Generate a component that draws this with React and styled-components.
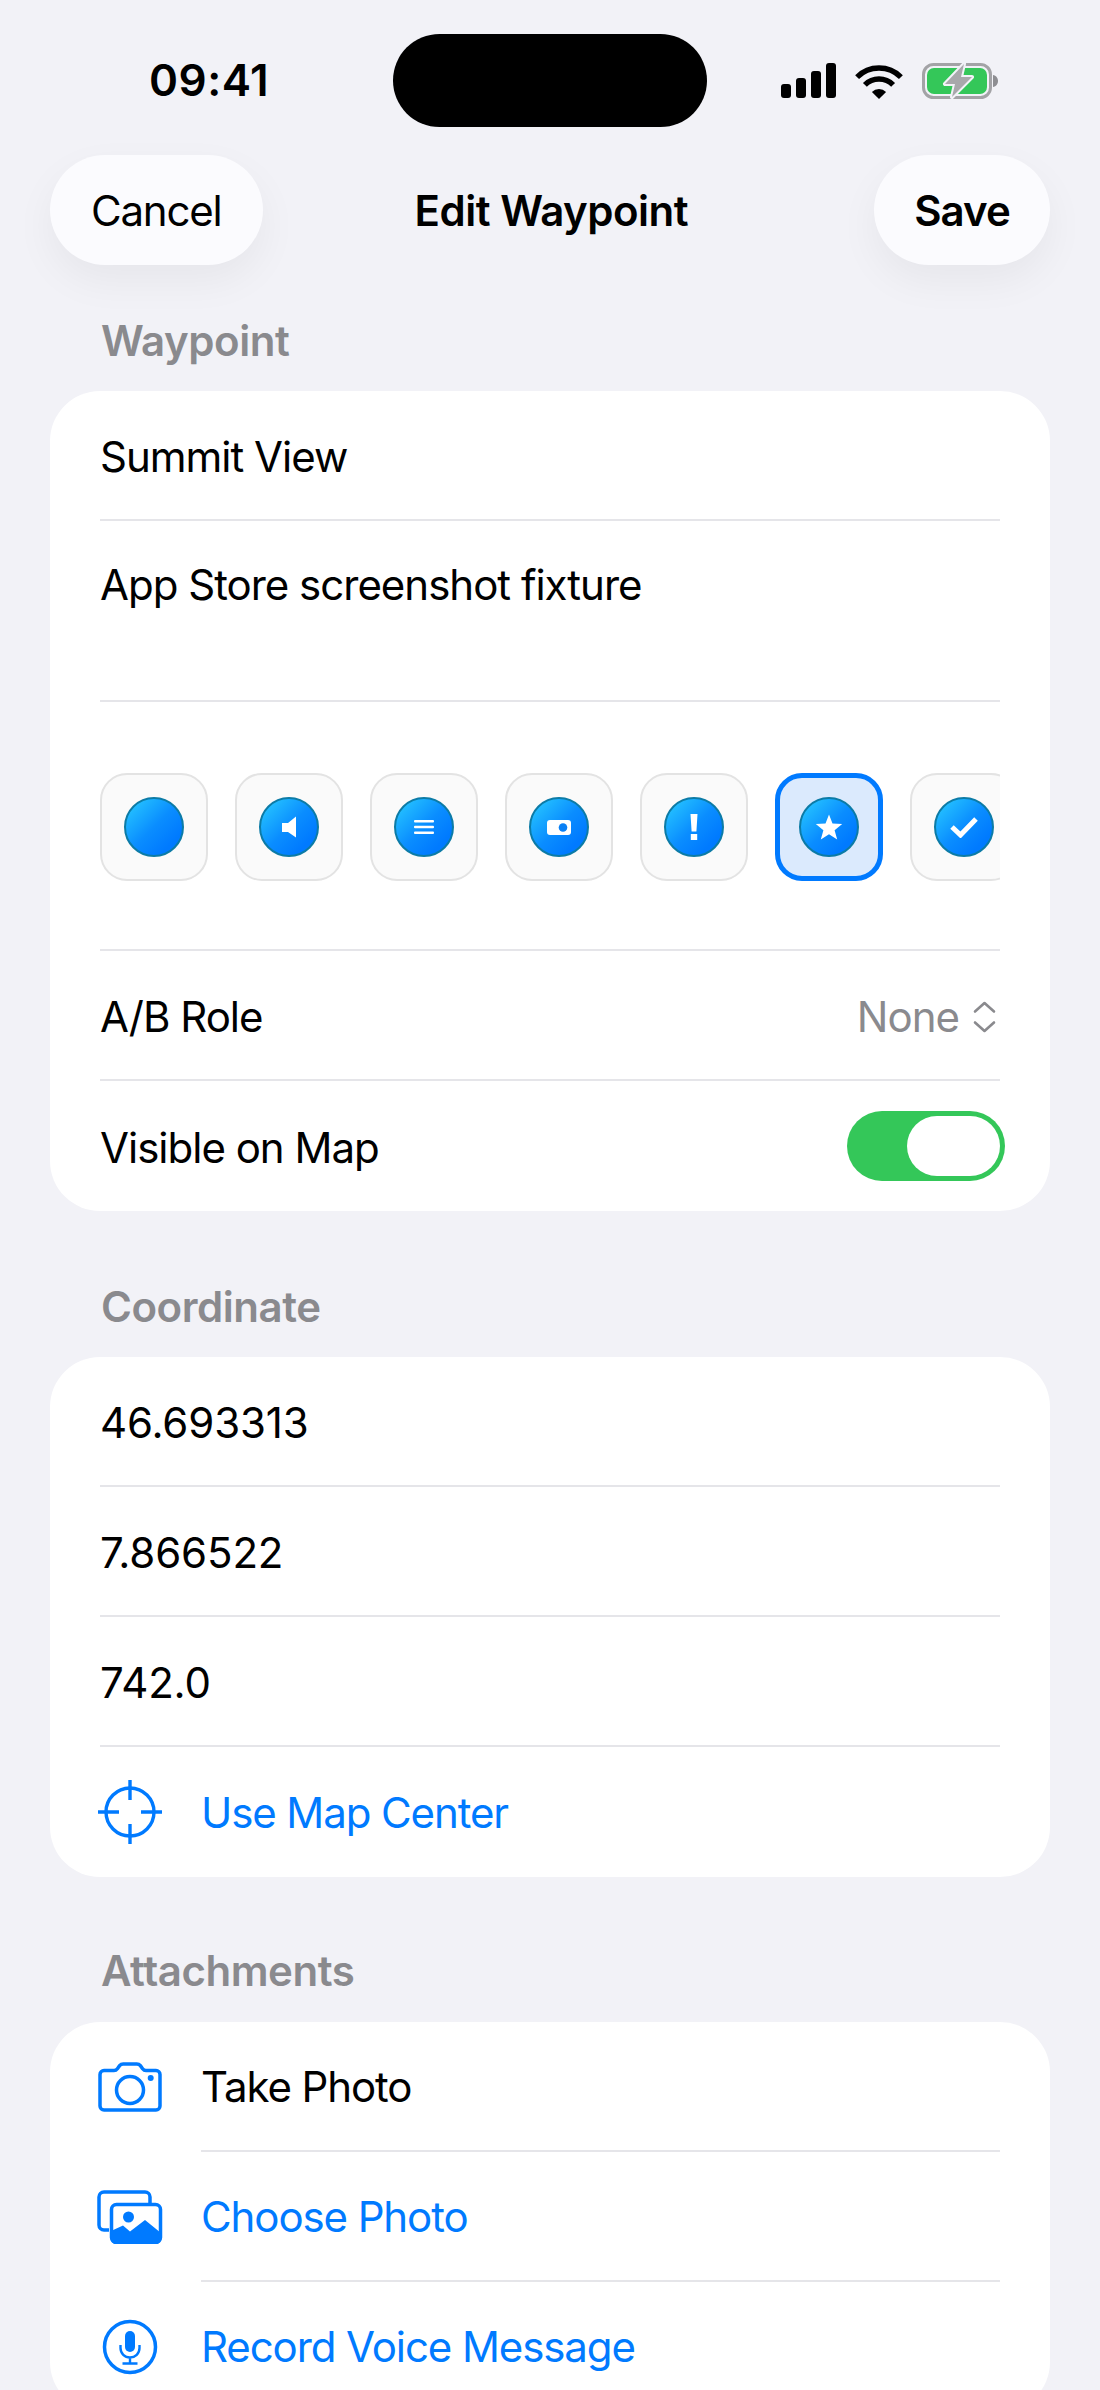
import React from "react";
import styled, { createGlobalStyle } from "styled-components";

const Global = createGlobalStyle`
  html, body { margin: 0; padding: 0; background: #f2f2f7; }
  * { box-sizing: border-box; }
  body { font-family: Inter, "Noto Sans", "Liberation Sans", sans-serif; -webkit-font-smoothing: antialiased; }
`;
const Page = styled.div`
  width: 1100px; height: 2390px; overflow: hidden; background: #f2f2f7; color: #000;
`;
const StatusBar = styled.div`
  display: grid; grid-template-columns: 393px 314px 1fr; height: 127px; padding-top: 34px;
`;
const Time = styled.div`
  font-size: 44px; font-weight: 600; line-height: 93px; padding-left: 149px; letter-spacing: 0.5px;
`;
const Island = styled.div`
  height: 93px; border-radius: 47px; background: #000;
`;
const StatusIcons = styled.div`
  display: flex; align-items: center; padding-left: 74px; height: 93px;
`;
const NavBar = styled.div`
  display: flex; align-items: center; justify-content: space-between;
  margin-top: 28px; padding: 0 50px; height: 110px;
`;
const NavButton = styled.div`
  height: 110px; padding: 0 ${p => p.$pad}px; border-radius: 55px; background: #fbfbfe;
  display: flex; align-items: center; font-size: 42px; font-weight: ${p => p.$bold ? 600 : 400};
  letter-spacing: ${p => p.$bold ? -0.9 : -1.2}px;
  box-shadow: 0 16px 40px rgba(0,0,0,0.05);
`;
const NavTitle = styled.div`
  font-size: 42px; font-weight: 600; letter-spacing: -0.5px; margin-right: 34px;
`;
const Section = styled.section`
  padding: 0 50px; margin-top: ${p => p.$top}px;
`;
const SectionTitle = styled.h2`
  margin: 0 0 ${p => p.$after}px; padding-left: 51px; font-size: 42px; font-weight: 600; line-height: 48px;
  color: #8a8a8e; letter-spacing: -0.45px;
`;
const Card = styled.div`
  background: #fff; border-radius: 50px; padding: 0 50px;
`;
const Row = styled.div`
  display: flex; align-items: ${p => p.$top ? "flex-start" : "center"}; justify-content: space-between;
  height: ${p => p.$h || 130}px; line-height: ${p => p.$top ? 127 : 130}px; font-size: 42px;
  padding-top: ${p => p.$top ? 0 : 3}px;
  letter-spacing: ${p => p.$num ? -0.15 : -1}px;
  border-bottom: ${p => p.$last ? "none" : "2px solid #e5e5e9"};
`;
const ActionRow = styled.div`
  display: flex; align-items: center; height: 130px; font-size: 42px; letter-spacing: -1.1px;
  color: ${p => p.$plain ? "#000" : "#007aff"};
`;
const ActionIcon = styled.div`
  width: 66px; margin-left: -3px; margin-right: 38px; display: flex; justify-content: center; flex: none;
`;
const ActionLabel = styled.div`
  flex: 1; align-self: stretch; display: flex; align-items: center;
  border-bottom: ${p => p.$last ? "none" : "2px solid #e5e5e9"};
`;
const Picker = styled.div`
  display: flex; gap: 27px; overflow: hidden; height: 249px; padding-top: 71px;
  border-bottom: 2px solid #e5e5e9;
`;
const Tile = styled.div`
  flex: none; width: 108px; height: 108px; border-radius: 27px;
  display: flex; align-items: center; justify-content: center;
  background: ${p => p.$on ? "#dbeafd" : "#fafafa"};
  border: ${p => p.$on ? "5px solid #007aff" : "2px solid #e3e3e3"};
`;
const Marker = styled.div`
  flex: none; width: 60px; height: 60px; border-radius: 50%; border: 2px solid #0c7ba6;
  background: linear-gradient(135deg, #25c3ff 8%, #0a8dff 50%, #007aff 80%);
  display: flex; align-items: center; justify-content: center;
`;
const RightValue = styled.div`
  display: flex; align-items: center; gap: 14px; color: #8a8a8e; margin-right: 4px; letter-spacing: -1px;
`;
const Toggle = styled.div`
  width: 158px; height: 70px; margin-right: -5px; margin-top: -3px; border-radius: 35px; background: #34c759;
  padding: 5px; display: flex; justify-content: flex-end;
`;
const Knob = styled.div`
  width: 93px; height: 60px; border-radius: 30px; background: #fff;
`;

const Signal = () => (
  <svg width="55" height="36" viewBox="0 0 55 36" fill="#000">
    <rect x="0" y="21" width="10" height="14" rx="3" />
    <rect x="15" y="15" width="10" height="20" rx="3" />
    <rect x="30" y="8" width="10" height="27" rx="3" />
    <rect x="45" y="0" width="10" height="35" rx="3" />
  </svg>
);
const Wifi = () => (
  <svg width="48" height="36" viewBox="0 0 48 36" style={{ marginLeft: 19 }}>
    <g fill="none" stroke="#000" strokeWidth="5.5">
      <path d="M2.1 14.1A31 31 0 0 1 45.9 14.1" />
      <path d="M9.9 21.9A20 20 0 0 1 38.1 21.9" />
    </g>
    <path d="M24 36L16.9 28.9A10 10 0 0 1 31.1 28.9Z" fill="#000" />
  </svg>
);
const Battery = () => (
  <svg width="79" height="36" viewBox="0 0 79 36" style={{ marginLeft: 19 }}>
    <rect x="1.5" y="1.5" width="67" height="33" rx="10" fill="none" stroke="#a3a3a6" strokeWidth="3" />
    <rect x="5" y="5" width="60" height="26" rx="7" fill="#34c759" />
    <path d="M71 12c3 .5 5 3 5 6s-2 5.500-5 6Z" fill="#8e8e92" />
    <path d="M42 1L23 21H33L30 34L50 14H39Z" fill="#a8a8ab" stroke="#f2f2f7" strokeWidth="4" paintOrder="stroke" strokeLinejoin="round" />
  </svg>
);

const glyphs = {
  none: null,
  speaker: <svg width="16" height="22" viewBox="0 0 16 22" fill="#fff"><path d="M15 0.500V21.500L7 16H1V7H7Z" /></svg>,
  menu: <svg width="20" height="16" viewBox="0 0 20 16" fill="#fff"><rect y="1" width="20" height="2.500" rx="1" /><rect y="6.800" width="20" height="2.500" rx="1" /><rect y="12.600" width="20" height="2.500" rx="1" /></svg>,
  radar: <svg width="24" height="15" viewBox="0 0 24 15"><rect width="24" height="15" rx="3" fill="#fff" /><circle cx="16" cy="7.500" r="4.300" fill="#0a80f5" /></svg>,
  alert: <svg width="8" height="26" viewBox="0 0 8 26" fill="#fff"><path d="M0.500 0H7.500L6.400 17.500H1.600Z" /><rect x="0.800" y="20" width="6.400" height="6" /></svg>,
  star: <svg width="28" height="26" viewBox="0 0 28 26" fill="#fff"><path d="M14 0.500L17.500 9.500L27.200 10L19.600 16.200L22.200 25.500L14 20.200L5.800 25.500L8.400 16.200L0.800 10L10.500 9.500Z" /></svg>,
  check: <svg width="28" height="22" viewBox="0 0 28 22" fill="none" stroke="#fff" strokeWidth="5"><path d="M2 11L10.500 19L26 3" /></svg>,
};
const tiles = ["none", "speaker", "menu", "radar", "alert", "star", "check"];

const Updown = () => (
  <svg width="23" height="32" viewBox="0 0 23 32" fill="none" stroke="#8a8a8e" strokeWidth="2.600" strokeLinecap="round" strokeLinejoin="round">
    <path d="M2 10.500L11.500 2L21 10.500" />
    <path d="M2 21.500L11.500 30L21 21.500" />
  </svg>
);
const Crosshair = () => (
  <svg width="64" height="64" viewBox="0 0 64 64" fill="none" stroke="#007aff" strokeWidth="3.400">
    <circle cx="32" cy="32" r="24" />
    <path d="M32 0V20M32 44V64M0 32H21M43 32H64" />
  </svg>
);
const Camera = () => (
  <svg width="64" height="50" viewBox="0 0 64 50" fill="none" stroke="#007aff" strokeWidth="3.500">
    <path d="M6 8.500h10c1.500 0 2.500-.6 3.400-1.800l2.200-3C22.600 2.500 23.800 2 25.200 2h13.600c1.400 0 2.600.5 3.600 1.700l2.200 3c.9 1.200 1.900 1.800 3.400 1.800h10c2.200 0 4 1.800 4 4V44c0 2.200-1.800 4-4 4H6c-2.200 0-4-1.800-4-4V12.500c0-2.200 1.800-4 4-4z" />
    <circle cx="32" cy="28" r="13.500" />
    <circle cx="52.700" cy="16" r="3" fill="#007aff" stroke="none" />
  </svg>
);
const Photos = () => (
  <svg width="66" height="54" viewBox="0 0 66 54" fill="none" stroke="#007aff" strokeWidth="3.500">
    <path d="M12 40H7c-2.800 0-5-2.200-5-5V7c0-2.800 2.200-5 5-5h41c2.800 0 5 2.200 5 5v6" />
    <rect x="14.500" y="14.500" width="49" height="38" rx="5" />
    <circle cx="31.500" cy="27" r="5.500" fill="#007aff" stroke="none" />
    <path d="M14 41L26 35.500L33 41.500L48 30L64 43V49c0 2.800-2.200 5-5 5H19c-2.800 0-5-2.200-5-5Z" fill="#007aff" stroke="none" />
  </svg>
);
const Mic = () => (
  <svg width="56" height="56" viewBox="0 0 56 56" fill="none" stroke="#007aff" strokeWidth="3.500">
    <circle cx="28" cy="28" r="25.500" />
    <rect x="23" y="12" width="10" height="21" rx="5" fill="#007aff" stroke="none" />
    <path d="M18.500 26v3c0 5.500 4.200 9.500 9.500 9.500s9.500-4 9.500-9.500v-3M28 38.500V44M20.500 44.500H35.500" strokeWidth="2.400" />
  </svg>
);

export default function App() {
  return (
    <Page>
      <Global />
      <StatusBar>
        <Time>09:41</Time>
        <Island />
        <StatusIcons><Signal /><Wifi /><Battery /></StatusIcons>
      </StatusBar>
      <NavBar>
        <NavButton $pad={41}>Cancel</NavButton>
        <NavTitle>Edit Waypoint</NavTitle>
        <NavButton $pad={40} $bold>Save</NavButton>
      </NavBar>
      <Section $top={52}>
        <SectionTitle $after={26}>Waypoint</SectionTitle>
        <Card>
          <Row>Summit View</Row>
          <Row $h={181} $top>App Store screenshot fixture</Row>
          <Picker>
            {tiles.map(t => (
              <Tile key={t} $on={t === "star"}><Marker>{glyphs[t]}</Marker></Tile>
            ))}
          </Picker>
          <Row>
            A/B Role
            <RightValue>None<Updown /></RightValue>
          </Row>
          <Row $last>
            Visible on Map
            <Toggle><Knob /></Toggle>
          </Row>
        </Card>
      </Section>
      <Section $top={72}>
        <SectionTitle $after={26}>Coordinate</SectionTitle>
        <Card>
          <Row $num>46.693313</Row>
          <Row $num>7.866522</Row>
          <Row $num>742.0</Row>
          <ActionRow>
            <ActionIcon><Crosshair /></ActionIcon>
            <ActionLabel $last>Use Map Center</ActionLabel>
          </ActionRow>
        </Card>
      </Section>
      <Section $top={70}>
        <SectionTitle $after={27}>Attachments</SectionTitle>
        <Card>
          <ActionRow $plain>
            <ActionIcon><Camera /></ActionIcon>
            <ActionLabel>Take Photo</ActionLabel>
          </ActionRow>
          <ActionRow>
            <ActionIcon><Photos /></ActionIcon>
            <ActionLabel>Choose Photo</ActionLabel>
          </ActionRow>
          <ActionRow>
            <ActionIcon><Mic /></ActionIcon>
            <ActionLabel>Record Voice Message</ActionLabel>
          </ActionRow>
        </Card>
      </Section>
    </Page>
  );
}
